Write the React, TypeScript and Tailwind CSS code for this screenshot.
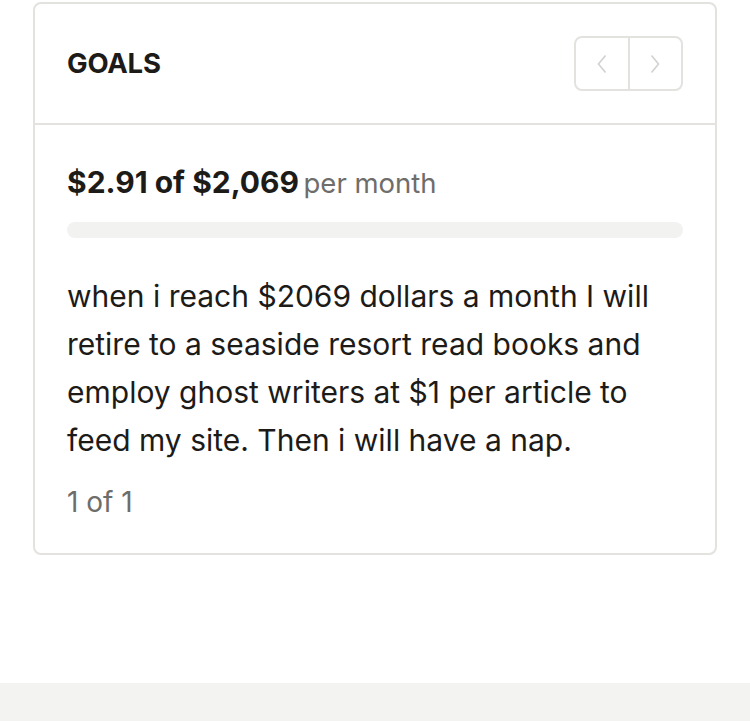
export default function App(): JSX.Element {
  return (
    <div className="min-h-[721px] bg-white flex flex-col" style={{ fontFamily: 'Inter, "Liberation Sans", sans-serif' }}>
      <div className="px-[33px] pt-[2px] h-[683px]">
        <section className="rounded-[8px] border-2 border-[#e3e2df] bg-white">
          <header className="flex h-[121px] items-center justify-between border-b-2 border-[#e3e2df] pl-[32px] pr-[32px]">
            <h2 className="text-[27.5px] font-bold tracking-[-0.2px] text-[#1d1b18]">GOALS</h2>
            <div className="flex h-[55px] w-[109px] overflow-hidden rounded-[8px] border-2 border-[#e3e2df]">
              <button className="flex flex-1 items-center justify-center border-r-2 border-[#e3e2df]" aria-label="Previous">
                <svg width="12" height="20" viewBox="0 0 12 20" fill="none" stroke="#d2d1ce" strokeWidth="1.6">
                  <path d="M9.5 1.5 L2.5 10 L9.5 18.5" />
                </svg>
              </button>
              <button className="flex flex-1 items-center justify-center" aria-label="Next">
                <svg width="12" height="20" viewBox="0 0 12 20" fill="none" stroke="#d2d1ce" strokeWidth="1.6">
                  <path d="M2.5 1.5 L9.5 10 L2.5 18.5" />
                </svg>
              </button>
            </div>
          </header>

          <div className="px-[32px] pt-[37px] pb-[31px]">
            <p className="leading-[40px] text-[#1d1b18]">
              <span className="text-[30px] font-bold">$2.91 of $2,069</span>{' '}
              <span className="text-[27.5px] text-[#6e6d6a]">per month</span>
            </p>
            <div className="mt-[15px] h-[16px] w-full rounded-full bg-[#f2f2f1]" />
            <p className="mt-[34px] text-[30px] leading-[48px] text-[#1d1b18]">
              when i reach $2069 dollars a month I will retire to a seaside resort read books and employ ghost writers at $1 per article to feed my site. Then i will have a nap.
            </p>
            <p className="mt-[18px] text-[28px] leading-[40px] text-[#6e6d6a]">1 of 1</p>
          </div>
        </section>
      </div>
      <div className="h-[38px] bg-[#f3f3f1]" />
    </div>
  );
}
